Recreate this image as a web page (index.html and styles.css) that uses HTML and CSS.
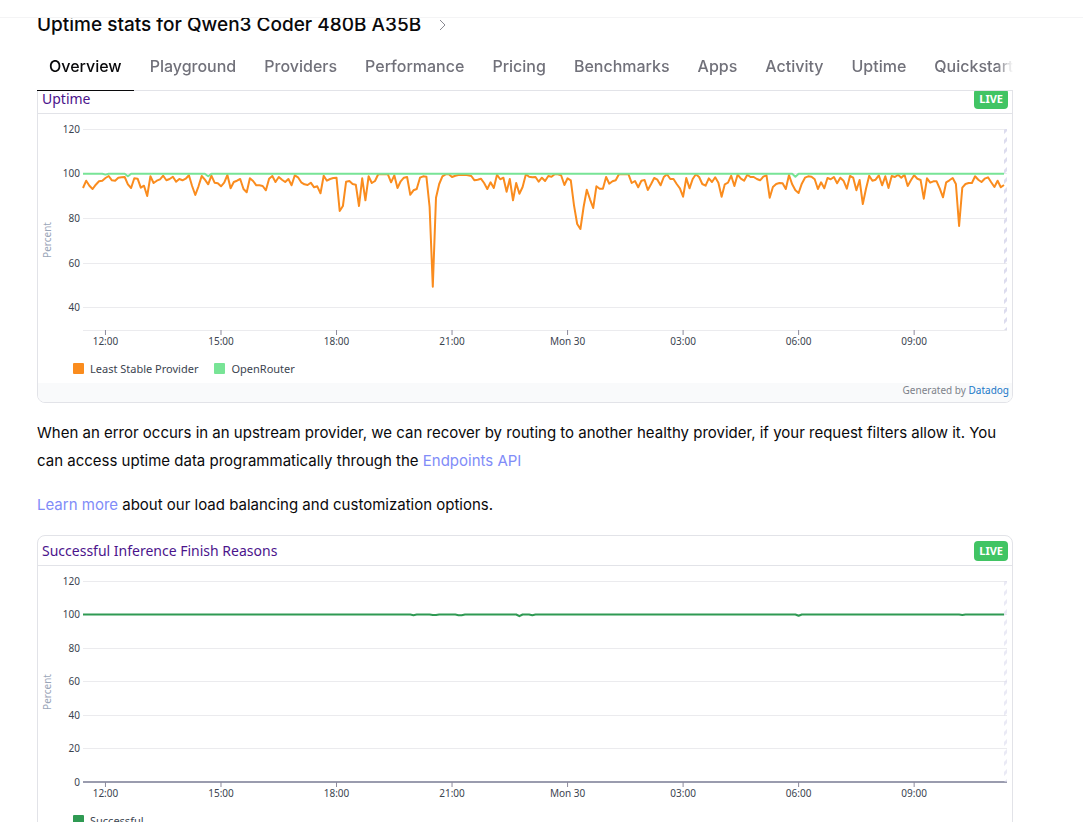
FILE: index.html
```html
<!DOCTYPE html>
<html lang="en">
<head>
    <meta charset="UTF-8">
    <meta name="viewport" content="width=device-width, initial-scale=1.0">
    <title>Qwen3 Coder 480B A35B - Uptime</title>
    <link rel="stylesheet" href="styles.css">
</head>
<body>
    <header class="site-header"></header>

    <main class="page">
        <h1 class="page-title">
            Uptime stats for Qwen3 Coder 480B A35B
            <svg class="chevron" viewBox="0 0 12 12" aria-hidden="true"><path d="M3 1l5 5-5 5"/></svg>
        </h1>

        <nav class="tabs">
            <div class="tab-list">
                <a class="tab active" href="#">Overview</a>
                <a class="tab" href="#">Playground</a>
                <a class="tab" href="#">Providers</a>
                <a class="tab" href="#">Performance</a>
                <a class="tab" href="#">Pricing</a>
                <a class="tab" href="#">Benchmarks</a>
                <a class="tab" href="#">Apps</a>
                <a class="tab" href="#">Activity</a>
                <a class="tab" href="#">Uptime</a>
                <a class="tab" href="#">Quickstart</a>
            </div>
        </nav>

        <section class="card card-first">
            <div class="card-header">
                <a class="card-title" href="#">Uptime</a>
                <span class="badge">LIVE</span>
            </div>
            <div id="uptime-chart" class="chart"></div>
            <div class="legend">
                <span class="legend-item"><i class="swatch orange"></i>Least Stable Provider</span>
                <span class="legend-item"><i class="swatch mint"></i>OpenRouter</span>
            </div>
            <div class="card-footer">Generated by <a href="#">Datadog</a></div>
        </section>

        <p class="text">When an error occurs in an upstream provider, we can recover by routing to another healthy provider, if your request filters allow it. You can access uptime data programmatically through the <a href="#">Endpoints API</a></p>
        <p class="text"><a href="#">Learn more</a> about our load balancing and customization options.</p>

        <section class="card">
            <div class="card-header">
                <a class="card-title" href="#">Successful Inference Finish Reasons</a>
                <span class="badge">LIVE</span>
            </div>
            <div id="finish-chart" class="chart"></div>
            <div class="legend">
                <span class="legend-item"><i class="swatch green"></i>Successful</span>
            </div>
            <div class="card-footer">Generated by <a href="#">Datadog</a></div>
        </section>
    </main>

    <script src="charts.js"></script>
</body>
</html>
```
FILE: styles.css
```css
:root {
    --border-color: #e2e3e8;
    --text-color: #09090b;
    --muted-color: #71717a;
    --link-color: #818cf8;
    --title-color: #4b148c;
    --live-color: #41c464;
    --orange: #fa8c1e;
    --mint: #78e496;
    --green: #2f9a53;
}

* {
    margin: 0;
    padding: 0;
    box-sizing: border-box;
}

body {
    height: 100vh;
    overflow: hidden;
    font-family: Inter, sans-serif;
    font-size: 16px;
    background-color: #fff;
    color: var(--text-color);
}

a {
    text-decoration: none;
}

.site-header {
    position: relative;
    z-index: 2;
    height: 18px;
    background-color: #fff;
    border-bottom: 1px solid #f4f4f5;
}

.page {
    padding: 0 70px 0 37px;
}

.page-title {
    display: flex;
    align-items: center;
    gap: 16px;
    margin-top: -7px;
    font-size: 19px;
    font-weight: 500;
    line-height: 28px;
}

.chevron {
    width: 12px;
    height: 12px;
    fill: none;
    stroke: #8a8a92;
    stroke-width: 1;
}

/* Tabs */
.tabs {
    position: relative;
    z-index: 1;
    margin-top: 4px;
    background-color: #fff;
    border-bottom: 1px solid var(--border-color);
}

.tab-list {
    display: flex;
    gap: 4px;
    margin-bottom: -1px;
    overflow: hidden;
    -webkit-mask-image: linear-gradient(to left, transparent, #000 16px);
    mask-image: linear-gradient(to left, transparent, #000 16px);
}

.tab {
    flex: none;
    padding: 11px 12px 12px;
    border-bottom: 1px solid transparent;
    font-weight: 500;
    line-height: 24px;
    color: var(--muted-color);
}

.tab.active {
    color: var(--text-color);
    border-bottom-color: var(--text-color);
}

/* Chart cards */
.card {
    margin-top: 16px;
    border: 1px solid var(--border-color);
    border-radius: 8px;
    overflow: hidden;
    font-family: "Noto Sans", sans-serif;
}

/* Scrolled partly under the tabs */
.card-first {
    margin-top: -8px;
}

.card-header {
    display: flex;
    align-items: center;
    justify-content: space-between;
    height: 30px;
    padding: 0 4px;
    border-bottom: 1px solid var(--border-color);
}

.card-title {
    font-size: 14px;
    line-height: 20px;
    color: var(--title-color);
}

.badge {
    padding: 0 5px;
    border-radius: 4px;
    background-color: var(--live-color);
    color: #fff;
    font-size: 11px;
    font-weight: 700;
    line-height: 20px;
}

.chart svg {
    display: block;
    width: 100%;
    height: 241px;
}

.chart text {
    font-size: 10px;
    fill: #3b4450;
}

.chart .axis-title {
    fill: #9aa5b8;
}

.grid-line {
    stroke: #ebebee;
}

.axis-line {
    stroke: #9a9cae;
    stroke-width: 2;
}

.tick {
    stroke: #8c8a9c;
}

.series {
    fill: none;
    stroke-width: 2;
    stroke-linejoin: round;
}

.legend {
    display: flex;
    align-items: center;
    gap: 16px;
    height: 28px;
    padding: 0 0 2px 35px;
    font-size: 11px;
    color: #3b4450;
}

.legend-item {
    display: flex;
    align-items: center;
    gap: 6px;
}

.swatch {
    width: 11px;
    height: 11px;
    border-radius: 1px;
}

.swatch.orange {
    background-color: var(--orange);
}

.swatch.mint {
    background-color: var(--mint);
}

.swatch.green {
    background-color: var(--green);
}

.card-footer {
    padding: 0 3px 4px;
    background-color: #f9fafb;
    color: #7d828a;
    font-size: 10px;
    line-height: 15px;
    text-align: right;
}

.card-footer a {
    color: #2078c8;
}

.text {
    margin-top: 16px;
    font-size: 15px;
    line-height: 28px;
}

.text a {
    color: var(--link-color);
}
```
FILE: charts.js
```js
// Drops below 100, one sample every 5 minutes, in steps of 0.15 percent
const leastStable = [
    43, 21, 36, 46, 33, 23, 21, 13, 7, 20, 21, 12, 11, 10, 32, 43, 14, 15, 42, 36,
    67, 8, 28, 21, 17, 6, 20, 16, 9, 24, 16, 20, 15, 5, 37, 64, 38, 7, 18, 32,
    6, 27, 29, 38, 27, 4, 44, 25, 21, 16, 46, 56, 14, 22, 35, 35, 37, 50, 15, 7,
    25, 10, 18, 25, 16, 35, 5, 11, 26, 32, 34, 27, 41, 38, 59, 6, 21, 16, 13, 12,
    112, 97, 24, 22, 31, 33, 97, 14, 80, 8, 28, 22, 2, 2, 2, 2, 26, 5, 43, 23,
    12, 10, 63, 50, 46, 12, 8, 9, 100, 339, 72, 31, 8, 2, 2, 10, 6, 4, 4, 3,
    5, 7, 20, 18, 15, 28, 46, 26, 43, 3, 17, 12, 54, 16, 80, 28, 60, 40, 2, 9,
    11, 10, 24, 12, 22, 7, 9, 2, 2, 5, 34, 14, 20, 95, 151, 166, 100, 48, 77, 103,
    38, 45, 45, 10, 30, 23, 20, 2, 2, 2, 2, 28, 22, 41, 21, 19, 49, 32, 13, 18,
    35, 10, 2, 16, 16, 31, 44, 69, 13, 44, 16, 2, 10, 31, 36, 14, 25, 11, 27, 69,
    32, 27, 6, 37, 3, 15, 21, 3, 10, 10, 16, 20, 9, 5, 72, 40, 31, 28, 29, 46,
    4, 32, 50, 58, 30, 12, 8, 9, 17, 46, 26, 44, 13, 17, 10, 29, 12, 21, 45, 7,
    12, 50, 19, 91, 45, 6, 21, 18, 5, 35, 8, 43, 7, 10, 3, 12, 3, 37, 20, 5,
    15, 19, 75, 14, 27, 23, 23, 45, 71, 26, 20, 13, 31, 157, 42, 31, 28, 28, 8, 18,
    25, 15, 11, 26, 40, 21, 41, 34
].map(drop => 100 - drop / 6.7);

const LAST_SAMPLE = leastStable.length - 1;
const times = ['12:00', '15:00', '18:00', '21:00', 'Mon 30', '03:00', '06:00', '09:00'];

// A flat line at 100 with a few dips, given as sample: value
function flatSeries(dips) {
    return leastStable.map((_, i) => dips[i] ?? 100);
}

function drawChart(id, options) {
    const box = document.getElementById(id);
    const width = box.clientWidth;
    const left = 45;
    const right = width - 5;
    const top = 15;
    const bottom = 216;
    const x = i => left + i * (right - 3 - left) / LAST_SAMPLE;
    const y = v => top + (120 - v) * (bottom - top) / (120 - options.min);

    let svg = `<defs><pattern id="${id}-hatch" width="4" height="10" patternUnits="userSpaceOnUse" x="${right - 3}">
        <path d="M-1 9L5 3" stroke="#dcdcee" stroke-width="3" opacity="${options.hatch}"/></pattern></defs>`;

    options.labels.forEach(v => {
        const lineY = Math.floor(y(v)) + 0.5;
        svg += `<path class="grid-line" d="M${left} ${lineY}H${right}"/>
            <text x="${left - 3}" y="${lineY + 3.5}" text-anchor="end">${v}</text>`;
    });

    // The zero line is heavier than a plain bottom edge
    svg += options.min === 0
        ? `<path class="axis-line" d="M${left} ${bottom}H${right}"/>`
        : `<path class="grid-line" d="M${left} ${bottom + 0.5}H${right}"/>`;

    // 12:00 is the 7th sample, then a label every 36 samples
    times.forEach((time, i) => {
        const tickX = x(7 + i * 36);
        svg += `<path class="tick" d="M${tickX} ${bottom}v5"/>
            <text x="${tickX}" y="231" text-anchor="middle">${time}</text>`;
    });

    svg += `<rect x="${right - 3}" y="${top}" width="3" height="${bottom - top}" fill="url(#${id}-hatch)"/>
        <text class="axis-title" transform="translate(13 126) rotate(-90)" text-anchor="middle">Percent</text>`;

    options.series.forEach(s => {
        const points = s.values.map((v, i) => `${x(i).toFixed(1)},${y(v).toFixed(1)}`).join(' ');
        svg += `<polyline class="series" stroke="${s.color}" points="${points}"/>`;
    });

    box.innerHTML = `<svg role="img" aria-label="${options.name}">${svg}</svg>`;
}

function drawAll() {
    drawChart('uptime-chart', {
        name: 'Uptime',
        min: 30,
        hatch: 1,
        labels: [120, 100, 80, 60, 40],
        series: [
            { color: 'var(--orange)', values: leastStable },
            { color: 'var(--mint)', values: flatSeries({ 7: 99.6, 14: 98.8, 39: 98.8, 222: 98.6 }) }
        ]
    });

    drawChart('finish-chart', {
        name: 'Successful Inference Finish Reasons',
        min: 0,
        hatch: 0.6,
        labels: [120, 100, 80, 60, 40, 20, 0],
        series: [
            { color: 'var(--green)', values: flatSeries({ 103: 99.6, 109: 99.7, 110: 99.7, 117: 99.6, 118: 99.6, 136: 99, 140: 99.5, 223: 99.2, 274: 99.7 }) }
        ]
    });
}

drawAll();
window.addEventListener('resize', drawAll);
```
